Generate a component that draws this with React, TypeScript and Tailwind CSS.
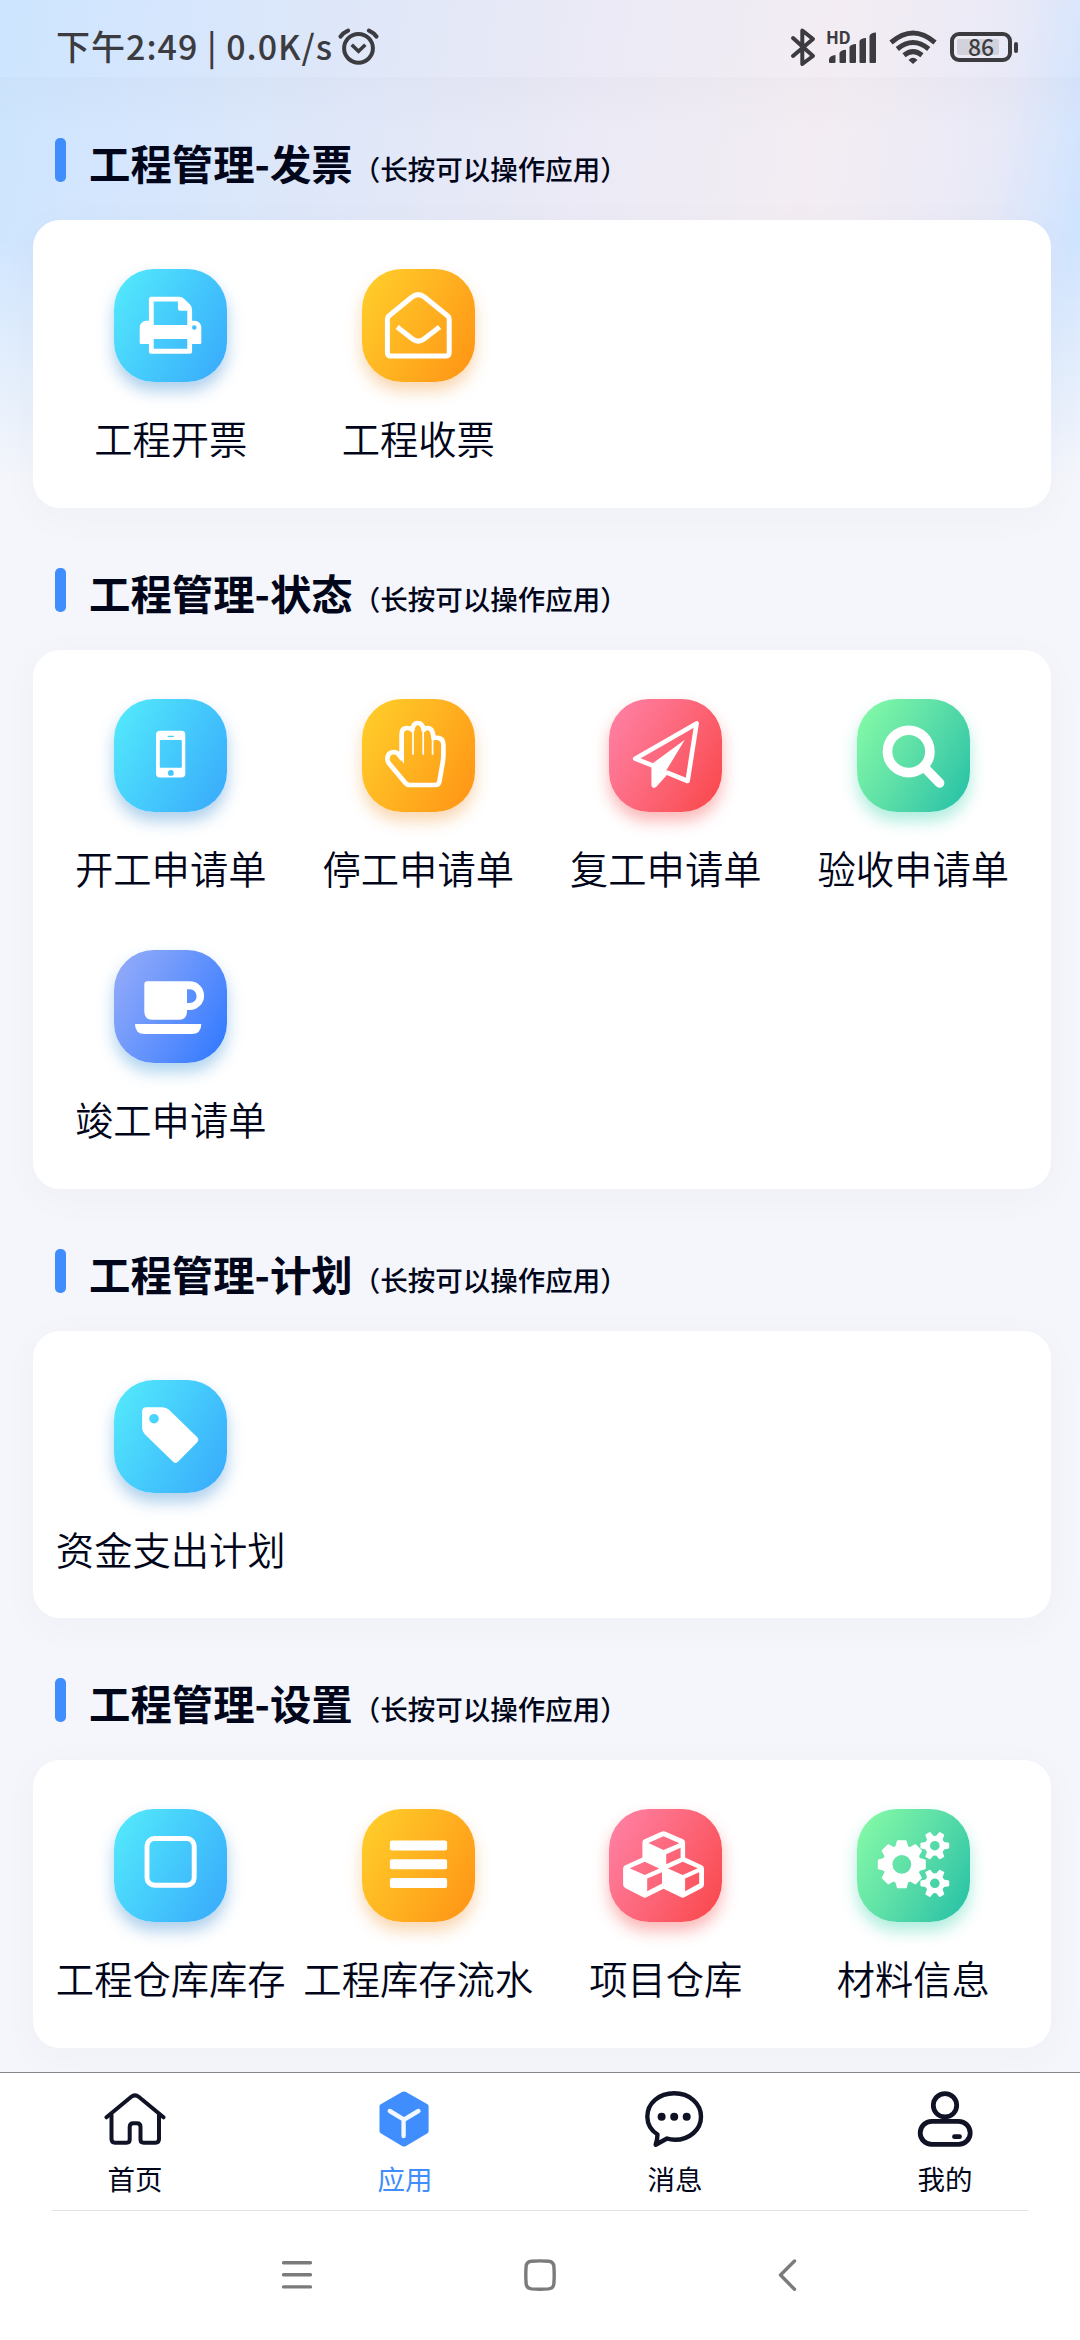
import type { ReactNode } from 'react'
import clsx from 'clsx'

type Tone = 'blue' | 'amber' | 'red' | 'green' | 'indigo'

const tones: Record<Tone, string> = {
  blue: 'from-[#55ecfb] to-[#39a8fb] shadow-[0_9px_16px_rgba(60,140,210,0.42)]',
  amber: 'from-[#ffd02b] to-[#ff9214] shadow-[0_9px_16px_rgba(240,150,50,0.38)]',
  red: 'from-[#ff82a8] to-[#f94346] shadow-[0_9px_16px_rgba(245,80,80,0.42)]',
  green: 'from-[#88fda6] to-[#19bfa6] shadow-[0_9px_16px_rgba(50,210,170,0.4)]',
  indigo: 'from-[#98adf8] to-[#2876ff] shadow-[0_9px_16px_rgba(60,150,215,0.42)]',
}

function Glyph({ children }: { children: ReactNode }) {
  return (
    <svg viewBox="0 0 113 113" className="h-full w-full" fill="#fff">
      {children}
    </svg>
  )
}

const PrinterIcon = (
  <Glyph>
    <path
      fillRule="evenodd"
      d="M37.4 27.8H65Q68 27.8 70.3 30L76 35.6Q78.1 38 78.1 41V51.8H80.8A6.5 6.5 0 0 1 87.3 58.3V73.8Q87.3 75.1 86 75.1H78.1V82.3Q78.1 84.8 75.6 84.8H37.4Q34.9 84.8 34.9 82.3V75.1H27Q25.7 75.1 25.7 73.8V58.3A6.5 6.5 0 0 1 32.2 51.8H34.9V30.3Q34.9 27.8 37.4 27.8ZM39.7 32.5V56.1H73.3V41.8H66.4Q63.9 41.8 63.9 39.3V32.5ZM39.7 70.1V79.8H73.3V70.1ZM80.3 56.2A2.3 2.3 0 1 0 80.3 60.8A2.3 2.3 0 1 0 80.3 56.2Z"
    />
  </Glyph>
)

const EnvelopeIcon = (
  <Glyph>
    <g fill="none" stroke="#fff" strokeWidth="5">
      <path d="M25.4 50Q25.4 48.2 26.8 47L50 28Q56.2 23.2 62.4 28L85.8 47Q87.2 48.2 87.2 50V83.5Q87.2 87 83.7 87H28.9Q25.4 87 25.4 83.5Z" />
      <path d="M35.2 58L50.5 70Q56.2 74.3 62 70L77.6 58" />
    </g>
  </Glyph>
)

const MobileIcon = (
  <Glyph>
    <path
      fillRule="evenodd"
      d="M46 31.7H67.3Q71.3 31.7 71.3 35.7V74.4Q71.3 78.4 67.3 78.4H46Q42 78.4 42 74.4V35.7Q42 31.7 46 31.7ZM46.8 41Q45.8 41 45.8 42V67.7Q45.8 68.7 46.8 68.7H66.8Q67.8 68.7 67.8 67.7V42Q67.8 41 66.8 41ZM53.6 36.7V37.9H60V36.7ZM56.8 71A2.9 2.9 0 1 0 56.8 76.8A2.9 2.9 0 1 0 56.8 71Z"
    />
  </Glyph>
)

const HandIcon = (
  <Glyph>
    <g fill="none" stroke="#fff" strokeWidth="4.7" strokeLinejoin="round">
      <path d="M39.6 60V35Q39.6 29 45.3 29Q48.5 29 50.3 31Q51 24 55.8 24Q60.6 24 61.6 31Q63 29 65.6 29Q71 29 71.4 39Q73 38.6 76 38.8Q81.4 39.5 81.4 46V55Q81.4 59 80.7 63.5L77.4 82.5Q76.8 86 73.3 86H47.6Q45 86 43.4 84L26.7 64Q25.4 62 25.4 59.6Q25.8 53.2 31.8 53Q35 53 37 55.8L40.4 60.4" />
      <path d="M51 30V55.7M61.2 30V55.7M70.6 38V55.7" strokeWidth="1.7" />
    </g>
    <path d="M37.4 52H42V64.8L37.4 58.5Z" />
  </Glyph>
)

const PlaneIcon = (
  <Glyph>
    <path
      d="M44 66.6L26.2 59.7L87.6 24.5L78.6 82L57.5 73.4"
      fill="none"
      stroke="#fff"
      strokeWidth="4.6"
      strokeLinejoin="round"
    />
    <path d="M75.8 40.7L43.8 64.2Q42.4 65.4 42.4 67V86Q42.6 89 45.5 88.8Q46.8 88.6 47.6 87.6L58.6 75.2L57.5 71L57.8 70.6Z" />
  </Glyph>
)

const SearchIcon = (
  <Glyph>
    <g fill="none" stroke="#fff" strokeWidth="9.6">
      <circle cx="51.7" cy="52.4" r="21.2" />
      <path d="M67 68L82.6 84" strokeLinecap="round" />
    </g>
  </Glyph>
)

const CoffeeIcon = (
  <Glyph>
    <path
      fillRule="evenodd"
      d="M33.3 31.3H75.7A14.35 14.35 0 0 1 75.7 60H73V61.7Q73 69.7 65 69.7H38.3Q30.3 69.7 30.3 61.7V34.3Q30.3 31.3 33.3 31.3ZM73 39.3V53H75.8A6.85 6.85 0 0 0 75.8 39.3Z"
    />
    <path d="M21 74H87.3Q87.3 84 77.5 84H30.8Q21 84 21 74Z" />
  </Glyph>
)

const TagIcon = (
  <Glyph>
    <path
      fillRule="evenodd"
      d="M32.5 27.2H48.6Q52.3 27.2 55 29.8L83 57Q85.6 59.7 83 62.4L64.2 81.6Q61.5 84.2 58.8 81.6L30.8 54.2Q28.1 51.5 28.1 47.8V31.6Q28.1 27.2 32.5 27.2ZM40 33.9A4.8 4.8 0 1 0 40 43.5A4.8 4.8 0 1 0 40 33.9Z"
    />
  </Glyph>
)

const SquareIcon = (
  <Glyph>
    <rect x="33" y="29.5" width="47.2" height="46.8" rx="7.5" fill="none" stroke="#fff" strokeWidth="4.9" />
  </Glyph>
)

const BarsIcon = (
  <Glyph>
    <rect x="27.9" y="31.6" width="57.2" height="10" rx="2" />
    <rect x="27.9" y="50.3" width="57.2" height="10" rx="2" />
    <rect x="27.9" y="69" width="57.2" height="10" rx="2" />
  </Glyph>
)

const CubesIcon = (
  <Glyph>
    <path
      fillRule="evenodd"
      d="M52.4 22.7Q54.5 21.6 56.6 22.7L74 30.2Q76.1 31.2 76.1 33.5V48.6L92.7 56.2Q95 57.2 95 59.6V75.6Q95 77.8 93 78.9L75.8 88.1Q73.7 89.2 71.6 88.1L54.5 79.8L37.9 88.1Q35.8 89.2 33.7 88.1L16.2 78.9Q14.1 77.8 14.1 75.6V59.6Q14.1 57.2 16.4 56.2L33.4 48.6V33.5Q33.4 31.2 35.5 30.2ZM54.5 27.3L39.3 34L54.5 41L70.3 34.2ZM57.2 45.3V55.3L71.6 48.7V38.7ZM35.8 52.7L20.7 59.3L35.8 65.9L50.2 59.4ZM38.2 69.6V82.3L53 74.5V63.2ZM73.7 52.7L58.9 59.4L73.7 65.9L88.8 59.3ZM76.1 69.6V82.3L90.2 74.5V63.2Z"
    />
  </Glyph>
)

function Gear({ cx, cy, r, body, hole, teeth, width }: Record<'cx' | 'cy' | 'r' | 'body' | 'hole' | 'teeth' | 'width', number>) {
  const ring = (body + hole) / 2
  return (
    <g transform={`translate(${cx} ${cy})`}>
      <circle r={ring} fill="none" stroke="#fff" strokeWidth={body - hole} />
      {Array.from({ length: teeth }, (_, i) => (
        <path
          key={i}
          transform={`rotate(${(360 / teeth) * i})`}
          d={`M${body - 2} ${-width * 0.68}L${r - 0.6} ${-width / 2}Q${r} ${-width / 2} ${r} ${-width / 2 + 1}V${width / 2 - 1}Q${r} ${width / 2} ${r - 0.6} ${width / 2}L${body - 2} ${width * 0.68}Z`}
        />
      ))}
    </g>
  )
}

const CogsIcon = (
  <Glyph>
    <Gear cx={44.8} cy={55.3} r={24} body={19} hole={9.4} teeth={8} width={9.8} />
    <Gear cx={77.8} cy={36.7} r={14.4} body={10} hole={4.8} teeth={6} width={5.8} />
    <Gear cx={77.8} cy={74.3} r={14.4} body={10} hole={4.8} teeth={6} width={5.8} />
  </Glyph>
)

interface AppItem {
  label: string
  tone: Tone
  icon: ReactNode
}

const sections: { title: string; items: AppItem[] }[] = [
  {
    title: '工程管理-发票',
    items: [
      { label: '工程开票', tone: 'blue', icon: PrinterIcon },
      { label: '工程收票', tone: 'amber', icon: EnvelopeIcon },
    ],
  },
  {
    title: '工程管理-状态',
    items: [
      { label: '开工申请单', tone: 'blue', icon: MobileIcon },
      { label: '停工申请单', tone: 'amber', icon: HandIcon },
      { label: '复工申请单', tone: 'red', icon: PlaneIcon },
      { label: '验收申请单', tone: 'green', icon: SearchIcon },
      { label: '竣工申请单', tone: 'indigo', icon: CoffeeIcon },
    ],
  },
  {
    title: '工程管理-计划',
    items: [{ label: '资金支出计划', tone: 'blue', icon: TagIcon }],
  },
  {
    title: '工程管理-设置',
    items: [
      { label: '工程仓库库存', tone: 'blue', icon: SquareIcon },
      { label: '工程库存流水', tone: 'amber', icon: BarsIcon },
      { label: '项目仓库', tone: 'red', icon: CubesIcon },
      { label: '材料信息', tone: 'green', icon: CogsIcon },
    ],
  },
]

function StatusBar() {
  return (
    <header className="flex h-[77px] shrink-0 items-start justify-between pl-[56px] pr-[62px] pt-7 text-[#3c3c40]">
      <div className="flex items-start">
        <span className="mt-px w-[280px] whitespace-nowrap text-[34px] font-medium leading-[34px] tracking-[1px]">
          下午2:49 | 0.0K/s
        </span>
        <svg viewBox="0 0 42 40" className="ml-px h-10 w-[42px]" fill="none" stroke="currentColor" strokeWidth="4">
          <circle cx="21.5" cy="20.3" r="14.4" />
          <path d="M16 18L21.5 23.2L27 18" strokeLinecap="square" strokeWidth="3.6" />
          <path d="M3.6 8.5Q6.5 4.6 11 2.6M39.4 8.5Q36.5 4.6 32 2.6" strokeLinecap="round" strokeWidth="4.2" />
        </svg>
      </div>
      <div className="flex items-start">
        <svg viewBox="0 0 26 40" className="h-10 w-[26px]" fill="none" stroke="currentColor" strokeWidth="4" strokeLinejoin="round" strokeLinecap="round">
          <path d="M3 10L23 28L12.3 36V2.5L23 11L3 28" />
        </svg>
        <div className="relative ml-[10px] h-10 w-[52px]">
          <span className="absolute left-0 top-0 text-[17px] font-bold leading-[17px] tracking-tight">HD</span>
          <svg viewBox="0 0 52 40" className="h-10 w-[52px]" fill="currentColor">
            <path d="M3 34V31Q4 27.5 9.5 27V34Q9.5 35 8.5 35H4Q3 35 3 34Z" />
            <path d="M13.5 34V25Q14.5 22 20 21.7V34Q20 35 19 35H14.5Q13.5 35 13.5 34Z" />
            <path d="M23.5 34V19Q24.5 16.3 30 16V34Q30 35 29 35H24.5Q23.5 35 23.5 34Z" />
            <path d="M33.5 34V13Q34.5 10.3 40 10V34Q40 35 39 35H34.5Q33.5 35 33.5 34Z" />
            <path d="M43.5 34V8Q44.5 4.8 50 4.5V34Q50 35 49 35H44.5Q43.5 35 43.5 34Z" />
          </svg>
        </div>
        <svg viewBox="0 0 48 40" className="ml-[11px] h-10 w-12" fill="none" stroke="currentColor" strokeWidth="5">
          <path d="M2 14.5Q24 -4.5 46 14.5M8.3 21Q24 8 39.7 21M15 27.2Q24 20 33 27.2" />
          <path d="M19.5 32Q24 27.5 28.5 32L24 36Z" fill="currentColor" stroke="none" />
        </svg>
        <div className="ml-[13px] mt-1 flex items-center">
          <div className="relative flex h-[30px] w-[62px] items-center justify-center rounded-[9px] border-4 border-current">
            <span className="absolute left-[3px] top-[3px] h-4 w-[42px] rounded-[2px] bg-[#d2d2dc]" />
            <span className="relative mb-[3px] text-[23px] font-medium leading-[22px]">86</span>
          </div>
          <span className="ml-[2px] h-[11px] w-1 rounded-full bg-current" />
        </div>
      </div>
    </header>
  )
}

function Section({ title, items }: { title: string; items: AppItem[] }) {
  return (
    <section className="pt-[60px]">
      <div className="flex h-[82px] items-start pl-[22px]">
        <span className="h-11 w-[11px] rounded-[5px] bg-[#408dfd]" />
        <h2 className="ml-[23px] mt-1 flex items-baseline whitespace-nowrap text-[41.4px] font-bold leading-[41px]">
          {title}
          <span className="text-[27.5px] font-medium leading-[28px]">（长按可以操作应用）</span>
        </h2>
      </div>
      <div className="grid grid-cols-4 rounded-[27px] bg-white px-[14px] py-[18px] shadow-[0_8px_40px_rgba(60,50,80,0.03)]">
        {items.map((item) => (
          <div key={item.label} className="flex h-[251.5px] flex-col items-center pt-[31px]">
            <div className={clsx('h-[113px] w-[113px] rounded-[40px] bg-linear-120', tones[item.tone])}>{item.icon}</div>
            <span className="mt-9 whitespace-nowrap text-[38.3px] font-[350] leading-[40px]">{item.label}</span>
          </div>
        ))}
      </div>
    </section>
  )
}

const tabs = [
  {
    label: '首页',
    icon: (
      <g fill="none" stroke="currentColor" strokeWidth="4" strokeLinejoin="round" strokeLinecap="round">
        <path d="M2.5 29.3L27 9Q31 5.8 35 9L59.5 29.3" />
        <path d="M7.5 27V51Q7.5 54.7 11 54.7H22.5Q25.7 54.7 25.7 51.5V39Q25.7 35.3 29.3 35.3H33Q36.5 35.3 36.5 39V51.5Q36.5 54.7 39.7 54.7H51.5Q55 54.7 55 51V27" />
      </g>
    ),
  },
  {
    label: '应用',
    active: true,
    icon: (
      <>
        <path
          d="M28 4Q30 2.8 32 4L53.5 16.3Q54.6 17 54.6 18.3V43Q54.6 44.5 53.5 45.2L32 58Q30 59 28 58L6.700 45.2Q5.5 44.5 5.5 43V18.3Q5.5 17 6.7 16.3Z"
          fill="#408dfd"
        />
        <path d="M15.8 23L30 31.6L44.4 23M29.6 32V48" fill="none" stroke="#f3f7ff" strokeWidth="4.4" strokeLinecap="round" />
      </>
    ),
  },
  {
    label: '消息',
    icon: (
      <>
        <path
          d="M13.5 46.5Q3.5 40 3.3 28.7C3.3 15 15 5.3 30.3 5.3C45.5 5.3 57 15.5 57 28.7C57 42 45 51.8 31 51.8Q26.5 51.8 23 50.5L11.7 56.7Q13.5 51 13.5 46.5Z"
          fill="none"
          stroke="currentColor"
          strokeWidth="4.4"
          strokeLinejoin="round"
        />
        <circle cx="17.6" cy="28.7" r="4" />
        <circle cx="30.2" cy="28.7" r="4" />
        <circle cx="42.7" cy="28.7" r="4" />
      </>
    ),
  },
  {
    label: '我的',
    icon: (
      <g fill="none" stroke="currentColor" strokeWidth="4.8">
        <circle cx="31" cy="17.3" r="11.7" />
        <rect x="6.2" y="33.4" width="50" height="23" rx="11.5" />
        <path d="M40.5 48.7H45.5" strokeLinecap="round" />
      </g>
    ),
  },
]

function TabBar() {
  return (
    <nav className="shrink-0 border-t border-[#85868b] bg-white">
      <div className="flex h-[137px]">
        {tabs.map((tab) => (
          <div key={tab.label} className="flex flex-1 flex-col items-center pt-[15px]">
            <svg viewBox="0 0 62 60" className="h-[60px] w-[62px] text-[#101325]" fill="currentColor">
              {tab.icon}
            </svg>
            <span className={clsx('mt-4 text-[27.5px] leading-[28px]', tab.active && 'text-[#408dfd]')}>
              {tab.label}
            </span>
          </div>
        ))}
      </div>
      <div className="mx-[52px] h-px bg-[#e3e3e5]" />
    </nav>
  )
}

function SystemNav() {
  return (
    <footer className="flex h-[129px] shrink-0 items-start bg-white pl-[280px] pt-[46px] text-[#7b7b7b]">
      <svg viewBox="0 0 34 36" className="h-9 w-[34px]" fill="none" stroke="currentColor" strokeWidth="3.4" strokeLinecap="round">
        <path d="M3.5 5.7H30.5M3.5 17.8H30.5M3.5 29.9H30.5" />
      </svg>
      <svg viewBox="0 0 36 36" className="ml-52 h-9 w-9" fill="none" stroke="currentColor" strokeWidth="3.4">
        <path d="M9.5 4.2Q18 3.6 26.5 4.2Q31.5 4.6 31.9 9.5Q32.5 18 31.9 26.5Q31.5 31.4 26.5 31.9Q18 32.5 9.5 31.9Q4.5 31.4 4.1 26.5Q3.5 18 4.1 9.5Q4.5 4.6 9.5 4.2Z" />
      </svg>
      <svg viewBox="0 0 28 36" className="ml-[218px] h-9 w-7" fill="none" stroke="currentColor" strokeWidth="3.4" strokeLinecap="round" strokeLinejoin="round">
        <path d="M18.5 4L4.5 18L18.5 32.3" />
      </svg>
    </footer>
  )
}

export default function App() {
  return (
    <div
      className="flex h-[2340px] w-[1080px] flex-col overflow-hidden bg-[#f4f6fb] bg-[linear-gradient(to_bottom,rgba(244,246,251,0)_240px,#f4f6fb_480px),linear-gradient(100deg,#cde5ff_0%,#d5e6fd_14%,#dde7f9_28%,#e9e9f6_48%,#f3edf3_72%,#f1ecf4_77%,#e8e9f7_88%,#cfe4ff_96%)] bg-[length:100%_480px] bg-no-repeat text-[#02061a]"
      style={{ fontFamily: '"Noto Sans CJK SC", sans-serif' }}
    >
      <StatusBar />
      <main className="min-h-0 flex-1 bg-[linear-gradient(to_bottom,rgba(60,50,60,0.018),transparent_55px)] bg-no-repeat pl-[33px] pr-[29px] pt-px">
        {sections.map((section) => (
          <Section key={section.title} {...section} />
        ))}
      </main>
      <TabBar />
      <SystemNav />
    </div>
  )
}
